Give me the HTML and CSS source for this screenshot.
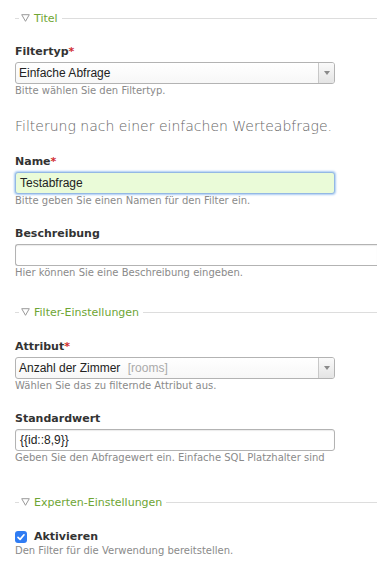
FILE: index.html
```html
<!DOCTYPE html>
<html lang="de">
<head>
<meta charset="utf-8">
<title>Filter</title>
<link rel="stylesheet" href="styles.css">
</head>
<body>
<div class="form">
  <section class="group">
    <div class="legend">
      <span class="legend-title">
        <svg class="tri" viewBox="0 0 9 8" width="9" height="8"><path d="M0.7 0.7 H8.3 L4.5 7.3 Z" fill="none" stroke="#9a9a9a" stroke-width="1"/></svg>
        Titel
      </span>
    </div>

    <div class="field">
      <div class="label">Filtertyp<span class="req">*</span></div>
      <div class="select">
        <span class="select-value">Einfache Abfrage</span>
        <span class="select-arrow"><span class="arrow"></span></span>
      </div>
      <div class="help">Bitte wählen Sie den Filtertyp.</div>
    </div>

    <div class="note">Filterung nach einer einfachen Werteabfrage.</div>

    <div class="field">
      <div class="label">Name<span class="req">*</span></div>
      <div class="input input-focus">Testabfrage</div>
      <div class="help">Bitte geben Sie einen Namen für den Filter ein.</div>
    </div>

    <div class="field">
      <div class="label">Beschreibung</div>
      <div class="input input-wide"></div>
      <div class="help">Hier können Sie eine Beschreibung eingeben.</div>
    </div>
  </section>

  <section class="group group-mid">
    <div class="legend">
      <span class="legend-title">
        <svg class="tri" viewBox="0 0 9 8" width="9" height="8"><path d="M0.7 0.7 H8.3 L4.5 7.3 Z" fill="none" stroke="#9a9a9a" stroke-width="1"/></svg>
        Filter-Einstellungen
      </span>
    </div>

    <div class="field">
      <div class="label">Attribut<span class="req">*</span></div>
      <div class="select">
        <span class="select-value">Anzahl der Zimmer <span class="muted">[rooms]</span></span>
        <span class="select-arrow"><span class="arrow"></span></span>
      </div>
      <div class="help">Wählen Sie das zu filternde Attribut aus.</div>
    </div>

    <div class="field">
      <div class="label">Standardwert</div>
      <div class="input">{{id::8,9}}</div>
      <div class="help nowrap">Geben Sie den Abfragewert ein. Einfache SQL Platzhalter sind</div>
    </div>
  </section>

  <section class="group group-last">
    <div class="legend">
      <span class="legend-title">
        <svg class="tri" viewBox="0 0 9 8" width="9" height="8"><path d="M0.7 0.7 H8.3 L4.5 7.3 Z" fill="none" stroke="#9a9a9a" stroke-width="1"/></svg>
        Experten-Einstellungen
      </span>
    </div>

    <div class="field field-check">
      <div class="check-row">
        <span class="checkbox">
          <svg viewBox="0 0 12 12" width="12" height="12"><path d="M3 6.3 L5.1 8.4 L9 3.8" fill="none" stroke="#fff" stroke-width="1.7" stroke-linecap="round" stroke-linejoin="round"/></svg>
        </span>
        <span class="label check-label">Aktivieren</span>
      </div>
      <div class="help">Den Filter für die Verwendung bereitstellen.</div>
    </div>
  </section>
</div>
</body>
</html>
```

FILE: styles.css
```css
html, body {
  margin: 0;
  padding: 0;
  background: #fff;
}

body {
  font-family: "DejaVu Sans", Verdana, sans-serif;
  color: #333;
  overflow: hidden;
}

.form {
  padding: 10px 0 0 15px;
}

.group {
  margin-bottom: 24px;
}

.group-mid {
  margin-bottom: 29px;
}

.legend {
  display: flex;
  align-items: center;
  height: 16px;
  margin-bottom: 18px;
}

.group-mid .legend {
  margin-bottom: 19px;
}

.legend::before {
  content: "";
  width: 4px;
  height: 1px;
  background: #ddd;
}

.legend::after {
  content: "";
  flex: 1;
  height: 1px;
  background: #ddd;
}

.legend-title {
  display: flex;
  align-items: center;
  gap: 4px;
  padding: 0 4px 0 2px;
  font-size: 11px;
  color: #6ea534;
  white-space: nowrap;
}

.tri {
  display: block;
}

.field {
  margin-bottom: 18px;
}

.label {
  font-size: 11px;
  font-weight: bold;
  line-height: 16px;
  height: 16px;
  margin-bottom: 2px;
  color: #333;
}

.req {
  color: #d12c2c;
}

.select,
.input {
  box-sizing: border-box;
  width: 320px;
  height: 22px;
  border: 1px solid #b3b3b3;
  border-radius: 3px;
  font-family: "Liberation Sans", Arial, sans-serif;
  font-size: 12px;
  line-height: 20px;
  color: #222;
}

.select {
  display: flex;
  background: linear-gradient(#fff, #f7f7f7);
}

.select-value {
  flex: 1;
  padding-left: 3px;
}

.muted {
  color: #aaa;
  margin-left: 4px;
}

.select-arrow {
  width: 15px;
  border-left: 1px solid #c8c8c8;
  border-radius: 0 2px 2px 0;
  background: linear-gradient(#fafafa, #e4e4e4);
  display: flex;
  align-items: center;
  justify-content: center;
}

.arrow {
  width: 0;
  height: 0;
  border-left: 3px solid transparent;
  border-right: 3px solid transparent;
  border-top: 4px solid #8a8a8a;
}

.input {
  padding-left: 4px;
  background: #fff;
  box-shadow: inset 0 1px 1px rgba(0, 0, 0, 0.08);
}

.input-focus {
  background: #eafbd8;
  border-color: #94b8e4;
  box-shadow: 0 0 2px 1px #a9cbf3;
}

.input-wide {
  width: 100%;
  border-right: none;
  border-radius: 3px 0 0 3px;
}

.help {
  font-size: 10px;
  line-height: 14px;
  color: #8a8a8a;
}

.nowrap {
  white-space: nowrap;
  overflow: hidden;
}

.note {
  margin: 16px 0 18px;
  font-family: "DejaVu Sans", sans-serif;
  font-weight: 200;
  font-size: 14px;
  line-height: 20px;
  color: #666;
}

.field-check {
  margin-top: 20px;
}

.check-row {
  display: flex;
  align-items: center;
  gap: 7px;
  height: 14px;
}

.checkbox {
  width: 12px;
  height: 12px;
  border-radius: 3px;
  background: #2f7cf3;
  display: flex;
}

.check-label {
  font-size: 11px;
  line-height: 14px;
  height: 14px;
  margin: 0;
}
```
